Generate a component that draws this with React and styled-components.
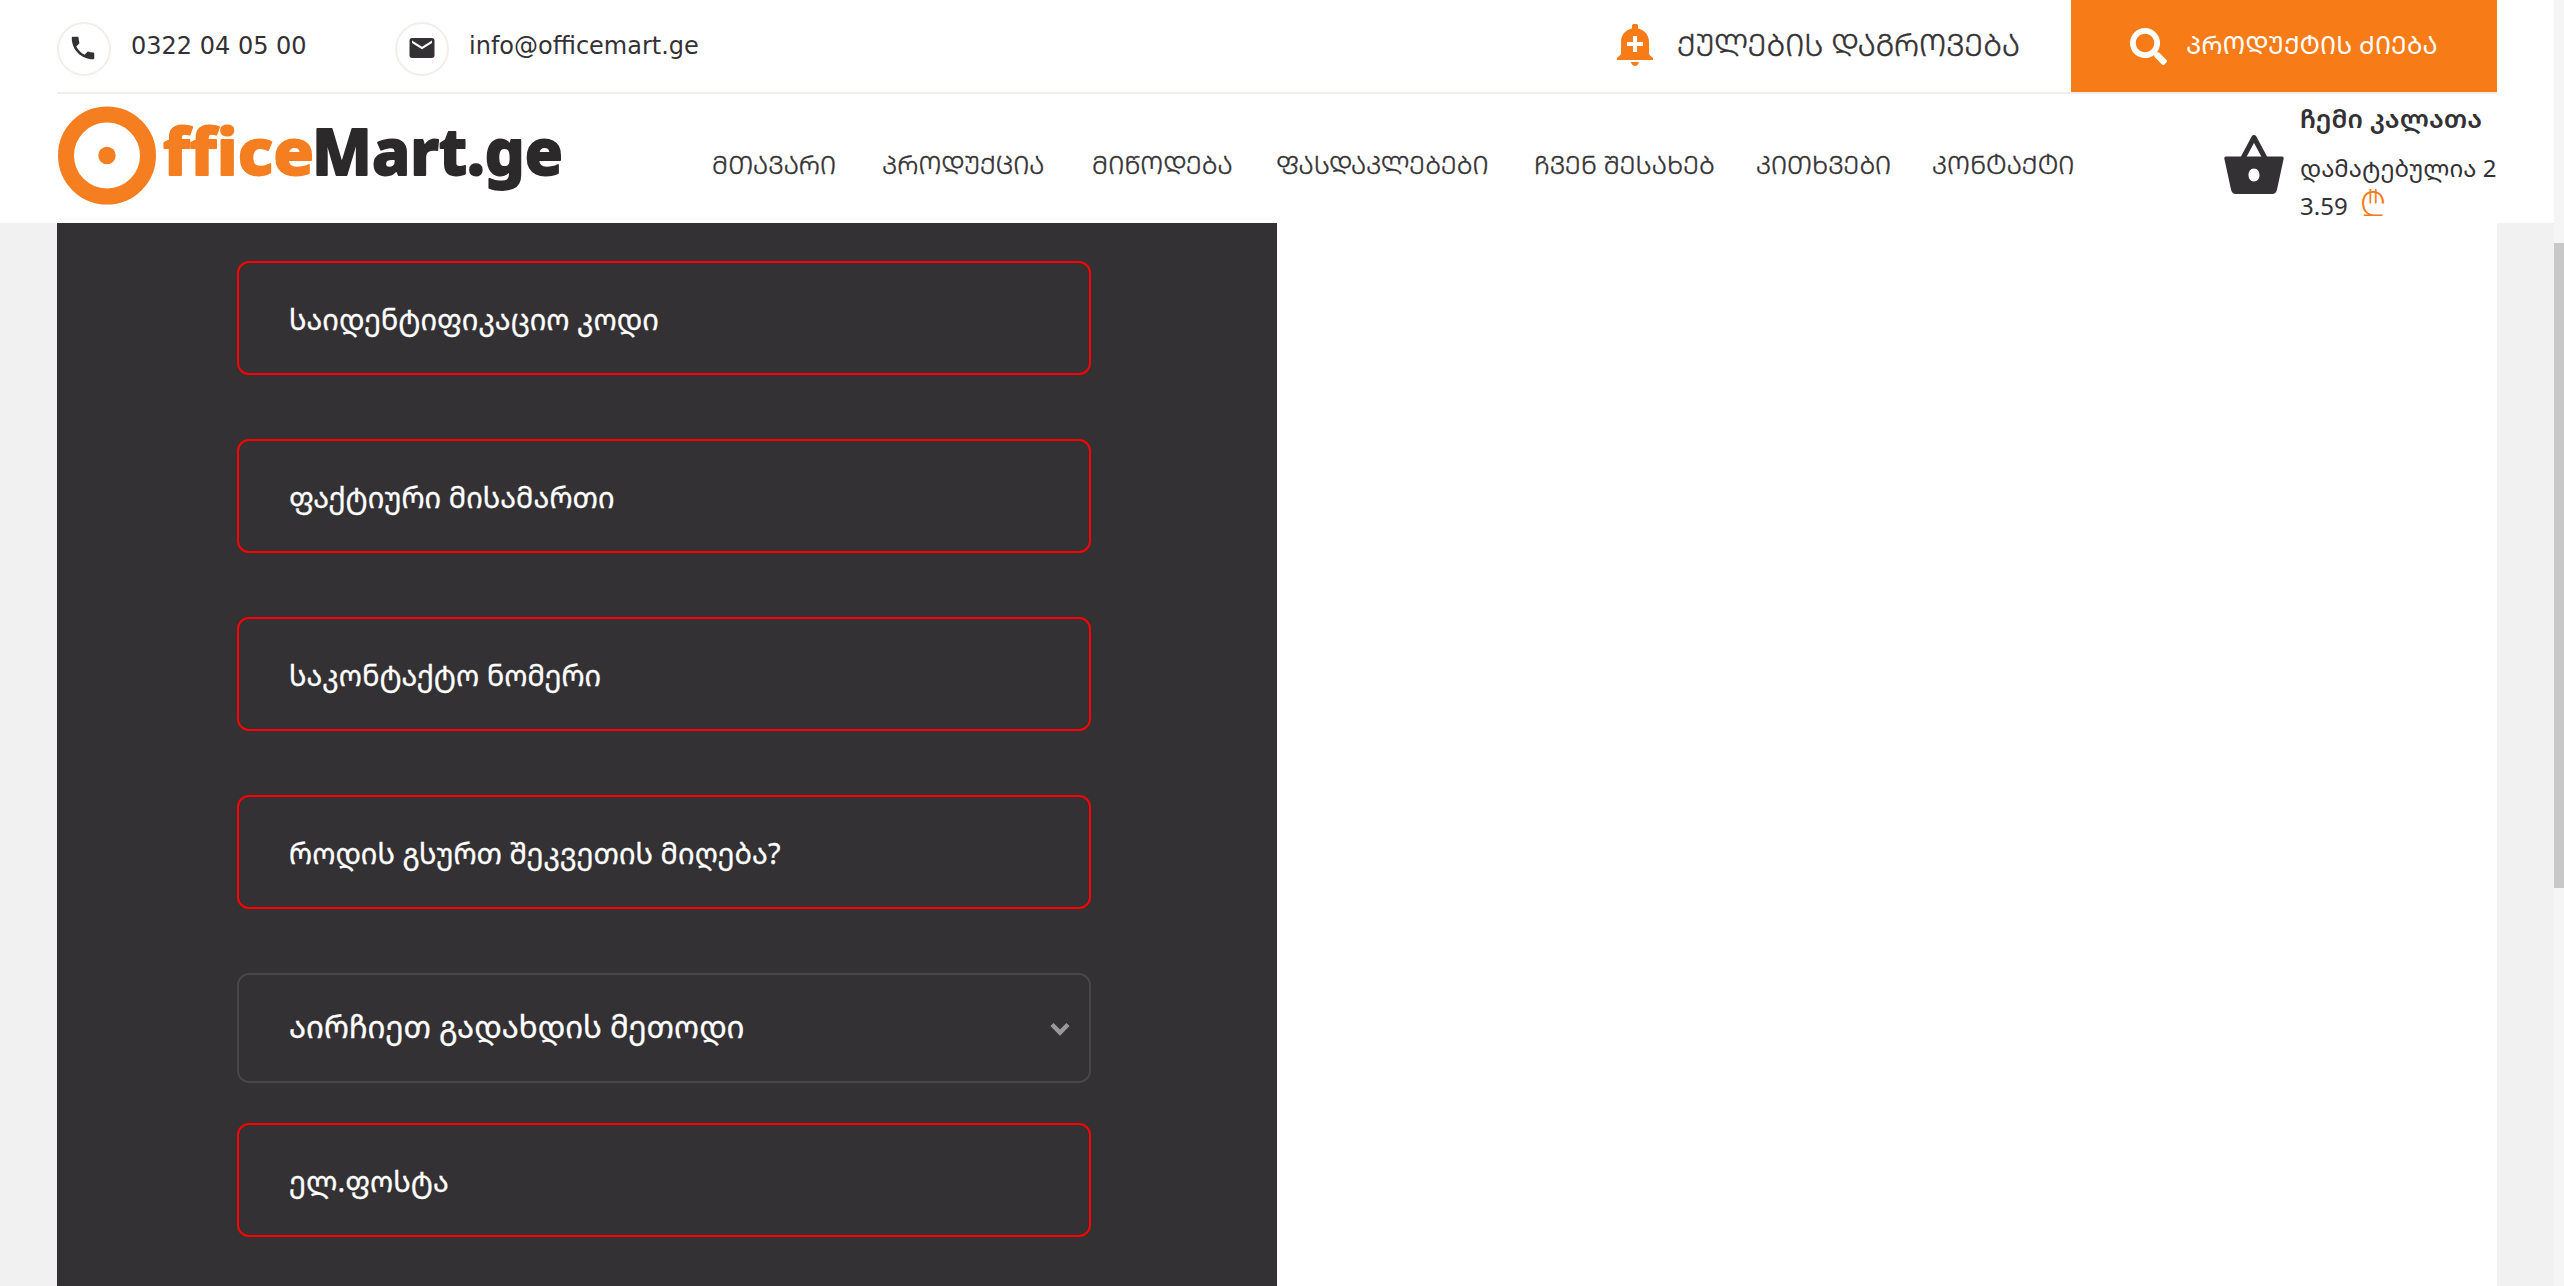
import React from "react";
import styled, { createGlobalStyle } from "styled-components";
import { FaSearch } from "react-icons/fa";
import { MdPhone, MdEmail } from "react-icons/md";

const GlobalStyle = createGlobalStyle`
  * { box-sizing: border-box; }
  body { margin: 0; background: #f1f1f1; color: #343134; overflow: hidden; }
  body, input, select, button { font-family: "Noto Sans Georgian", "DejaVu Sans", sans-serif; }
`;

const Shell = styled.div`
  display: flex;
  height: 1286px;
`;
const Page = styled.div`
  flex: 1;
  display: flex;
  flex-direction: column;
`;
const Header = styled.header`
  background: #fff;
  height: 223px;
  padding: 0 57px;
`;
const TopBar = styled.div`
  display: flex;
  height: 94px;
  border-bottom: 2px solid #f3eeeb;
`;
const Contact = styled.a`
  display: flex;
  align-items: flex-start;
  width: ${(p) => p.$width}px;
  padding-top: 22px;
  color: #343134;
`;
const IconRing = styled.span`
  display: flex;
  align-items: center;
  justify-content: center;
  width: 54px;
  height: 54px;
  border: 2px solid #f3eeeb;
  border-radius: 50%;
  padding: 0 ${(p) => p.$shift || 0}px 2px 0;
`;
const ContactText = styled.span`
  margin: 8px 0 0 20px;
  font: 24px/32px "DejaVu Sans", sans-serif;
`;
const Points = styled.a`
  display: flex;
  align-items: flex-start;
  margin-left: auto;
  margin-right: 50px;
  padding-top: 24px;
`;
const PointsText = styled.span`
  width: 344px;
  margin-left: 24px;
  font-size: 30.7px;
  font-weight: 300;
  line-height: 40px;
  white-space: nowrap;
  -webkit-text-stroke: 0.5px #343134;
`;
const SearchButton = styled.button`
  display: flex;
  align-items: center;
  width: 426px;
  height: 92px;
  padding: 0 0 0 59px;
  border: 0;
  background: #f77b17;
  color: #fff;
  font-size: 25.3px;
`;
const SearchLabel = styled.span`
  margin-left: 19px;
  padding-bottom: 4px;
  line-height: 36px;
`;
const MainBar = styled.div`
  display: flex;
  height: 129px;
`;
const LogoLink = styled.a`
  display: block;
  width: 655px;
  padding-top: 12px;
`;
const Nav = styled.nav`
  display: grid;
  grid-template-columns: 170px 210px 184px 258px 222px 176px 142px;
  padding-top: 52px;
`;
const NavLink = styled.a`
  font-size: 25.9px;
  font-weight: 300;
  line-height: 36px;
  white-space: nowrap;
  -webkit-text-stroke: 0.45px #343134;
`;
const Cart = styled.div`
  display: flex;
  margin-left: auto;
  width: 273px;
  white-space: nowrap;
`;
const CartIcon = styled.span`
  margin: 40px 16px 0 0;
  width: 60px;
`;
const CartInfo = styled.div`
  padding-top: 6px;
`;
const CartTitle = styled.div`
  font-size: 26px;
  font-weight: 600;
  line-height: 36px;
`;
const CartLine = styled.div`
  font-size: 24px;
  line-height: 38px;
  margin-top: ${(p) => p.$top || 0}px;
`;
const Lari = styled.span`
  margin-left: 12px;
  color: #f77b17;
  font-size: 35px;
  font-weight: 300;
  line-height: 0;
  vertical-align: -1px;
`;
const Content = styled.main`
  flex: 1;
  margin: 0 57px;
  background: #fff;
`;
const FormPanel = styled.form`
  width: 1220px;
  height: 100%;
  padding: 38px 186px 0 180px;
  background: #343134;
`;
const Field = styled.input`
  display: block;
  width: 100%;
  height: 114px;
  margin-bottom: ${(p) => p.$gap}px;
  padding: 1px 50px 0;
  border: 2px solid #f00;
  border-radius: 12px;
  background: transparent;
  color: #fff;
  font-size: 28.9px;
  -webkit-text-stroke: 0.3px #fff;
  &::placeholder { color: #fff; opacity: 1; }
`;
const SelectBox = styled.div`
  display: flex;
  align-items: center;
  justify-content: space-between;
  height: 110px;
  margin-bottom: 40px;
  padding: 0 19px 0 50px;
  border: 2px solid #484648;
  border-radius: 12px;
  color: #fff;
  font-size: 31.2px;
`;
const SelectValue = styled.span`
  padding-bottom: 4px;
  -webkit-text-stroke: 0.3px #fff;
`;
const ScrollTrack = styled.div`
  width: 10px;
  padding-top: 243px;
  background: #f5f5f5;
`;
const ScrollThumb = styled.div`
  height: 645px;
  background: #c8c8c8;
`;

const NAV = ["მთავარი", "პროდუქცია", "მიწოდება", "ფასდაკლებები", "ჩვენ შესახებ", "კითხვები", "კონტაქტი"];
const FIELDS = ["საიდენტიფიკაციო კოდი", "ფაქტიური მისამართი", "საკონტაქტო ნომერი", "როდის გსურთ შეკვეთის მიღება?"];

const LogoWord = styled.text`
  font-family: "Noto Sans", sans-serif;
  font-weight: 800;
  font-size: 64px;
  font-variant-ligatures: none;
  stroke-width: 1.8px;
  stroke-linejoin: round;
`;

const Logo = () => (
  <svg width="520" height="110" viewBox="0 0 520 110" aria-label="OfficeMart.ge">
    <circle cx="50" cy="49.5" r="41" fill="none" stroke="#f57e20" strokeWidth="16" />
    <circle cx="50" cy="49.5" r="8.7" fill="#f57e20" />
    <LogoWord x="106" y="69" textLength="151" lengthAdjust="spacingAndGlyphs" fill="#f57e20" stroke="#f57e20">ffice</LogoWord>
    <LogoWord x="255" y="69" textLength="251" lengthAdjust="spacingAndGlyphs" fill="#2b292a" stroke="#2b292a">Mart.ge</LogoWord>
  </svg>
);

const Bell = () => (
  <svg width="36" height="42" viewBox="0 0 36 42" fill="#f77b17">
    <path d="M15 1.500Q15 0 16.500 0h3Q21 0 21 1.500V4.600C28 6 32 11.600 32 18v11c0 1.400.6 2 4 5v2H0v-2c3.400-3 4-3.600 4-5V18C4 11.600 8 6 15 4.600Z" />
    <path d="M14 38h8c-.6 2.600-2 4-4 4s-3.400-1.400-4-4Z" />
    <path d="M18 12v16M10 20h16" stroke="#fff" strokeWidth="4" />
  </svg>
);

const Basket = () => (
  <svg width="60" height="60" viewBox="0 0 60 60" fill="#343134">
    <path d="M18.500 25 30 3.500 41.500 25" fill="none" stroke="#343134" strokeWidth="5" strokeLinejoin="round" />
    <path fillRule="evenodd" d="M2 22.500h56q2 0 1.700 2L53 55.500Q52 60 48 60H12Q8 60 7 55.500L.3 24.500Q0 22.500 2 22.500ZM30 34.500c-3.600 0-5.500 3-5.500 6.500s1.900 6.500 5.500 6.500 5.500-3 5.500-6.500-1.900-6.500-5.500-6.500Z" />
  </svg>
);

const Chevron = () => (
  <svg width="20" height="16" viewBox="0 0 20 16">
    <path d="M2 4.500 10 12.500 18 4.500" fill="none" stroke="#999" strokeWidth="4.500" />
  </svg>
);

export default function App() {
  return (
    <Shell>
      <GlobalStyle />
      <Page>
        <Header>
          <TopBar>
            <Contact $width={338}>
              <IconRing $shift={2}><MdPhone size={30} /></IconRing>
              <ContactText>0322 04 05 00</ContactText>
            </Contact>
            <Contact $width={320}>
              <IconRing><MdEmail size={30} /></IconRing>
              <ContactText>info@officemart.ge</ContactText>
            </Contact>
            <Points>
              <Bell />
              <PointsText>{"ქულების დაგროვება".toUpperCase()}</PointsText>
            </Points>
            <SearchButton type="button">
              <FaSearch size={37} />
              <SearchLabel>{"პროდუქტის ძიება".toUpperCase()}</SearchLabel>
            </SearchButton>
          </TopBar>
          <MainBar>
            <LogoLink><Logo /></LogoLink>
            <Nav>
              {NAV.map((label) => <NavLink key={label}>{label.toUpperCase()}</NavLink>)}
            </Nav>
            <Cart>
              <CartIcon><Basket /></CartIcon>
              <CartInfo>
                <CartTitle>ჩემი კალათა</CartTitle>
                <CartLine $top={13}>დამატებულია 2</CartLine>
                <CartLine>3.59<Lari>₾</Lari></CartLine>
              </CartInfo>
            </Cart>
          </MainBar>
        </Header>
        <Content>
          <FormPanel>
            {FIELDS.map((label) => <Field key={label} placeholder={label} $gap={64} />)}
            <SelectBox>
              <SelectValue>აირჩიეთ გადახდის მეთოდი</SelectValue>
              <Chevron />
            </SelectBox>
            <Field placeholder="ელ.ფოსტა" $gap={0} />
          </FormPanel>
        </Content>
      </Page>
      <ScrollTrack><ScrollThumb /></ScrollTrack>
    </Shell>
  );
}
